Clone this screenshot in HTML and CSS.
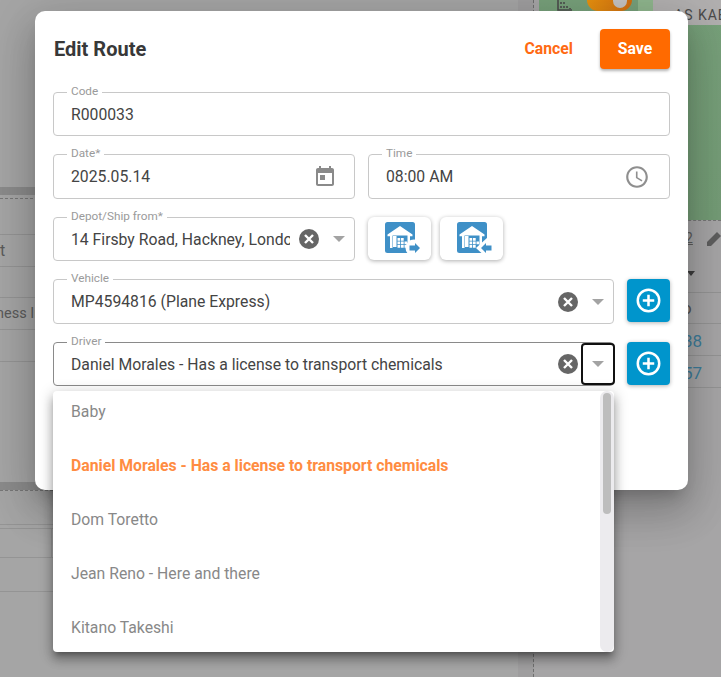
FILE: index.html
```html
<!DOCTYPE html>
<html lang="en">
<head>
<meta charset="utf-8">
<title>Edit Route</title>
<link rel="stylesheet" href="styles.css">
</head>
<body>
<div class="page">
  <section class="bg-left">
    <div class="bg-bar"></div>
    <div class="bg-dash"></div>
    <div class="bg-row bg-row-a"></div>
    <div class="bg-row bg-row-b"><span class="bg-text">t</span></div>
    <div class="bg-row bg-row-s"></div>
    <div class="bg-row bg-row-b"><span class="bg-text bg-text-far">ness In</span></div>
    <div class="bg-row bg-row-b"></div>
    <div class="bg-gap"></div>
    <div class="bg-bar"></div>
    <div class="bg-dash bg-dash-low"></div>
    <div class="bg-row bg-row-c"></div>
    <div class="bg-row bg-row-d"><span class="bg-cell"></span></div>
    <div class="bg-row bg-row-e"></div>
  </section>
  <div class="bg-sep"></div>
  <section class="bg-right">
    <div class="bg-map">
      <svg class="bg-chart" viewBox="0 0 16 11" aria-hidden="true"><path d="M1 0v10h14M4 2v2M4 6v2M7 2v2M7 6v2M10 6v2M13 8v1" fill="none" stroke="#4c4c4c" stroke-width="1.6"/></svg>
      <div class="bg-toggle"><span class="bg-knob"></span></div>
      <div class="bg-road"></div>
      <span class="bg-place">AS KABUL</span>
    </div>
    <div class="bg-dash bg-dash-map"></div>
    <div class="bg-table">
      <div class="bg-head">
        <span class="bg-num">2</span>
        <svg class="bg-pencil" viewBox="0 0 16 16" aria-hidden="true"><path d="M0 16v-4L10 2l4 4L4 16z" fill="#5e5e5e"/></svg>
      </div>
      <div class="bg-sort"></div>
      <div class="bg-tr bg-tr-a"><span class="bg-dark">o</span></div>
      <div class="bg-tr"><span class="bg-link">38</span></div>
      <div class="bg-tr"><span class="bg-link">57</span></div>
    </div>
  </section>
</div>

<div class="modal">
  <header class="modal-head">
    <h2 class="modal-title">Edit Route</h2>
    <button class="btn-cancel" type="button">Cancel</button>
    <button class="btn-save" type="button">Save</button>
  </header>

  <div class="form">
    <div class="field">
      <span class="label">Code</span>
      <span class="value">R000033</span>
    </div>

    <div class="row row-half">
      <div class="field">
        <span class="label">Date*</span>
        <span class="value">2025.05.14</span>
        <svg class="adorn" viewBox="0 0 24 24" aria-hidden="true"><path d="M19 3h-1V1h-2v2H8V1H6v2H5c-1.11 0-2 .9-2 2v14c0 1.1.89 2 2 2h14c1.1 0 2-.9 2-2V5c0-1.1-.9-2-2-2zm0 16H5V8h14v11zM7 10h5v5H7z" fill="#8a8a8a"/></svg>
      </div>
      <div class="field">
        <span class="label">Time</span>
        <span class="value">08:00 AM</span>
        <svg class="adorn adorn-clock" viewBox="0 0 24 24" aria-hidden="true"><path d="M11.99 2C6.47 2 2 6.48 2 12s4.47 10 9.99 10C17.52 22 22 17.52 22 12S17.52 2 11.99 2zM12 20c-4.42 0-8-3.58-8-8s3.58-8 8-8 8 3.58 8 8-3.58 8-8 8zm.5-13H11v6l5.25 3.15.75-1.23-4.5-2.67z" fill="#8f8f8f"/></svg>
      </div>
    </div>

    <div class="row row-half">
      <div class="field">
        <span class="label">Depot/Ship from*</span>
        <span class="value value-clip">14 Firsby Road, Hackney, London, E8 1DD</span>
        <svg class="clear" viewBox="0 0 20 20" aria-hidden="true"><circle cx="10" cy="10" r="10" fill="#666"/><path d="M6 6l8 8M14 6l-8 8" stroke="#fff" stroke-width="2.4"/></svg>
        <span class="arrow-box"><span class="caret"></span></span>
      </div>
      <div class="depot-actions">
        <button class="btn-icon" type="button">
          <svg class="wh" viewBox="0 0 40 32" aria-hidden="true">
            <rect width="30" height="31" rx="2.5" fill="#3f90c7"/>
            <path d="M2.5 12.5L15 4l12.500 8.500v1.700H25V26H5V14.200H2.500z" fill="#fff"/>
            <path d="M7.500 13.500h15V26h-15z" fill="#3f90c7"/>
            <path d="M8 14h3.500v11H8zM12.500 16h2.700v2.700h-2.700zM16 16h2.700v2.700H16zM12.500 19.500h2.700v2.700h-2.700zM16 19.500h2.700v2.700H16zM19.500 19.500h2.700v2.700h-2.700zM12.500 23h2.700v2.700h-2.700zM16 23h2.700v2.700H16zM19.500 23h2.700v2.700h-2.700z" fill="#fff"/>
            <circle cx="29" cy="26" r="8.500" fill="#fff"/>
            <path d="M24.500 23.500H30V21l5 5-5 5v-2.500h-5.500z" fill="#3f90c7"/>
          </svg>
        </button>
        <button class="btn-icon" type="button">
          <svg class="wh" viewBox="0 0 40 32" aria-hidden="true">
            <rect width="30" height="31" rx="2.500" fill="#3f90c7"/>
            <path d="M2.500 12.500L15 4l12.500 8.500v1.700H25V26H5V14.200H2.500z" fill="#fff"/>
            <path d="M7.500 13.500h15V26h-15z" fill="#3f90c7"/>
            <path d="M8 14h3.500v11H8zM12.500 16h2.700v2.700h-2.700zM16 16h2.700v2.700H16zM12.500 19.500h2.700v2.700h-2.700zM16 19.500h2.700v2.700H16zM19.500 19.500h2.700v2.700h-2.700zM12.500 23h2.700v2.700h-2.700zM16 23h2.700v2.700H16z" fill="#fff"/>
            <path d="M31 15L19 26l12 11z" fill="#fff"/>
            <path d="M34.500 23.500H29V21l-5 5 5 5v-2.500h5.500z" fill="#3f90c7"/>
          </svg>
        </button>
      </div>
    </div>

    <div class="row row-add">
      <div class="field grow">
        <span class="label">Vehicle</span>
        <span class="value value-clip">MP4594816 (Plane Express)</span>
        <svg class="clear" viewBox="0 0 20 20" aria-hidden="true"><circle cx="10" cy="10" r="10" fill="#666"/><path d="M6 6l8 8M14 6l-8 8" stroke="#fff" stroke-width="2.400"/></svg>
        <span class="arrow-box"><span class="caret"></span></span>
      </div>
      <button class="btn-add" type="button">
        <svg viewBox="0 0 24 24" aria-hidden="true"><circle cx="12" cy="12" r="10.300" fill="none" stroke="#fff" stroke-width="2.400"/><path d="M12 6.500v11M6.500 12h11" stroke="#fff" stroke-width="2.400"/></svg>
      </button>
    </div>

    <div class="row row-add">
      <div class="field grow field-open">
        <span class="label">Driver</span>
        <span class="value value-clip">Daniel Morales - Has a license to transport chemicals</span>
        <svg class="clear" viewBox="0 0 20 20" aria-hidden="true"><circle cx="10" cy="10" r="10" fill="#666"/><path d="M6 6l8 8M14 6l-8 8" stroke="#fff" stroke-width="2.400"/></svg>
        <span class="arrow-box arrow-focus"><span class="caret"></span></span>
      </div>
      <button class="btn-add" type="button">
        <svg viewBox="0 0 24 24" aria-hidden="true"><circle cx="12" cy="12" r="10.300" fill="none" stroke="#fff" stroke-width="2.400"/><path d="M12 6.500v11M6.500 12h11" stroke="#fff" stroke-width="2.400"/></svg>
      </button>
    </div>
  </div>
</div>

<div class="dropdown">
  <ul class="options">
    <li class="option">Baby</li>
    <li class="option option-on">Daniel Morales - Has a license to transport chemicals</li>
    <li class="option">Dom Toretto</li>
    <li class="option">Jean Reno - Here and there</li>
    <li class="option">Kitano Takeshi</li>
  </ul>
  <div class="scroll"><span class="thumb"></span></div>
</div>
</body>
</html>
```

FILE: styles.css
```css
* { box-sizing: border-box; }

html, body {
  margin: 0;
  height: 677px;
  overflow: hidden;
}

body {
  position: relative;
  font-family: Roboto, "Liberation Sans", sans-serif;
  background: #a6a5a6;
}

/* dimmed page behind the dialog */
.page {
  display: flex;
  height: 677px;
  color: #5c5c5c;
}

.bg-left {
  width: 518px;
  padding-top: 187px;
  flex: none;
  background: #a5a5a5;
}

.bg-bar { height: 8px; background: #8b8b8b; }

.bg-dash {
  height: 1px;
  margin-top: 3px;
  border-top: 1px dashed #777;
}

.bg-row {
  border-bottom: 1px solid #949494;
  display: flex;
  align-items: center;
  font-size: 16px;
}

.bg-row-a { height: 36px; }
.bg-row-b { height: 32px; }
.bg-row-s { height: 31px; }
.bg-row-c { height: 34px; }
.bg-row-d { height: 30px; margin-top: 3px; border-top: 1px solid #949494; }
.bg-row-e { height: 34px; }
.bg-gap { height: 120px; }
.bg-dash-low { margin-top: 0; }

.bg-text { color: #5a5a5a; }
.bg-text-far { margin-left: -4px; font-size: 14.500px; }
.bg-cell { margin-left: 51px; height: 100%; border-left: 1px solid #949494; }

.bg-sep {
  width: 16px;
  flex: none;
  background: #9f9e9f;
  border-right: 1px dashed #6f6f6f;
}

.bg-right { flex: 1; min-width: 0; overflow: hidden; }

.bg-map {
  display: flex;
  height: 220px;
  margin-left: 5px;
  background: linear-gradient(#77a07a, #749c76);
  position: relative;
  padding-left: 18px;
  align-items: flex-start;
}

.bg-chart { width: 16px; height: 11px; flex: none; }

.bg-toggle {
  width: 45px;
  height: 11px;
  margin-left: 14px;
  flex: none;
  background: linear-gradient(90deg, #e8920f, #cf6d12);
  border-radius: 0 0 14px 14px;
  display: flex;
  justify-content: flex-end;
  padding-right: 5px;
}

.bg-knob {
  width: 14px;
  height: 8px;
  background: #c4c2c0;
  border-radius: 0 0 8px 8px;
}

.bg-road {
  width: 30px;
  height: 26px;
  margin-left: 6px;
  background: #8fb58d;
  clip-path: polygon(0 0, 60% 0, 100% 60%, 100% 100%, 60% 100%, 0 40%);
  flex: none;
}

.bg-place {
  position: absolute;
  top: 0;
  left: 114px;
  right: 0;
  white-space: nowrap;
  font-size: 14px;
  letter-spacing: 1px;
  color: #4a4a4a;
  line-height: 14px;
  padding: 8px 0 0 21px;
  height: 25px;
  overflow: hidden;
  background: #b1afaf;
}

.bg-dash-map { margin-top: 0; }

.bg-table { padding-left: 150px; white-space: nowrap; font-size: 17px; }

.bg-head {
  display: flex;
  align-items: center;
  height: 34px;
  gap: 14px;
  font-size: 14px;
}

.bg-num { margin-left: 1px; text-decoration: underline; }
.bg-pencil { width: 16px; height: 16px; flex: none; }

.bg-sort {
  height: 38px;
  border-bottom: 1px solid #949494;
  padding: 16px 0 0 3px;
}

.bg-sort::before {
  content: "";
  display: block;
  width: 0;
  height: 0;
  border: 4px solid transparent;
  border-top: 5px solid #3c3c3c;
}

.bg-tr {
  height: 32px;
  padding-top: 3px;
  border-bottom: 1px solid #949494;
  display: flex;
  align-items: center;
}

.bg-tr-a { height: 31px; padding-top: 0; }
.bg-link { color: #3d7c99; margin-left: -1px; }
.bg-dark { margin-left: -2px; color: #555; }

/* dialog */
.modal {
  position: absolute;
  left: 35px;
  top: 11px;
  width: 653px;
  height: 479px;
  padding: 18px 18px 0;
  background: #fff;
  border-radius: 10px;
  box-shadow: 0 11px 15px -7px rgba(0,0,0,.2), 0 24px 38px 3px rgba(0,0,0,.14), 0 9px 46px 8px rgba(0,0,0,.12);
}

.modal-head {
  display: flex;
  align-items: center;
  height: 40px;
  margin-bottom: 22.900px;
}

.modal-title {
  margin: 0 auto 0 1px;
  font-size: 20px;
  font-weight: 700;
  color: #383838;
}

.btn-cancel {
  border: 0;
  background: none;
  padding: 0 0 1px;
  margin-right: 27px;
  font: 700 15.750px Roboto, sans-serif;
  color: #ff6a13;
}

.btn-save {
  width: 70px;
  height: 40px;
  border: 0;
  border-radius: 4px;
  padding: 0 0 2px;
  background: #ff6a00;
  color: #fff;
  font: 700 15.750px Roboto, sans-serif;
  box-shadow: 0 2px 3px rgba(0,0,0,.3);
}

.form {
  display: flex;
  flex-direction: column;
  gap: 18px;
}

.row { display: flex; gap: 13px; }

.row-half {
  display: grid;
  grid-template-columns: 302px 302px;
}

.row-add { align-items: flex-start; }
.grow { flex: 1; min-width: 0; }

.field {
  position: relative;
  display: flex;
  align-items: center;
  height: 44.500px;
  padding: 0 8px 0 17px;
  border: 1px solid #c8c8c8;
  border-radius: 4px;
  color: #444;
}

.field-open { border-color: #8a8a8a; }

.label {
  position: absolute;
  left: 13px;
  top: -8px;
  padding: 0 4px;
  background: #fff;
  font-size: 11.750px;
  line-height: 13px;
  color: #9a9a9a;
  white-space: nowrap;
}

.value {
  flex: 1;
  min-width: 0;
  padding-top: 1px;
  font-size: 15.750px;
  line-height: 20px;
  white-space: nowrap;
}

.value-clip { overflow: hidden; margin-right: 9px; }

.adorn { width: 24px; height: 24px; margin-right: 9px; flex: none; }
.adorn-clock { width: 26px; height: 26px; margin-right: 11px; }

.clear { width: 20px; height: 20px; flex: none; margin-right: 3px; }

.arrow-box {
  width: 34px;
  height: 42px;
  margin-right: -10px;
  flex: none;
  display: flex;
  align-items: center;
  justify-content: center;
  border: 2px solid transparent;
  border-radius: 4px;
}

.arrow-focus { border-color: #111; }

.caret {
  width: 0;
  height: 0;
  border-left: 6px solid transparent;
  border-right: 6px solid transparent;
  border-top: 6px solid #a3a3a3;
}

.depot-actions { display: flex; gap: 9px; }

.btn-icon {
  width: 63px;
  height: 43px;
  border: 0;
  border-radius: 6px;
  background: #fff;
  padding: 5px 0 0 17px;
  display: flex;
  box-shadow: 0 1px 4px rgba(0,0,0,.32);
}

.wh { width: 40px; height: 32px; flex: none; overflow: hidden; }

.btn-add {
  width: 43px;
  height: 43px;
  flex: none;
  border: 0;
  border-radius: 4px;
  padding: 9px;
  background: #0095cc;
  display: flex;
  box-shadow: 0 1px 4px rgba(0,0,0,.3);
}

.btn-add svg { width: 25px; height: 25px; flex: none; }

/* open list of drivers */
.dropdown {
  position: absolute;
  left: 53px;
  top: 391px;
  width: 561px;
  height: 261px;
  display: flex;
  overflow: hidden;
  background: #fff;
  border-radius: 4px;
  box-shadow: 0 5px 5px -3px rgba(0,0,0,.3), 0 8px 10px 1px rgba(0,0,0,.2), 0 3px 14px 2px rgba(0,0,0,.18);
}

.options {
  flex: 1;
  list-style: none;
  margin: -7px 0 0;
  padding: 0;
}

.option {
  height: 54px;
  padding-left: 18px;
  display: flex;
  align-items: center;
  font-size: 15.750px;
  color: #888;
}

.option-on {
  font-weight: 700;
  color: #ff8c42;
}

.scroll {
  width: 14px;
  flex: none;
  padding: 2px 3px 0;
  background: #ecebee;
  border-radius: 7px;
}

.thumb {
  display: block;
  height: 121px;
  background: #bdbdbd;
  border-radius: 4px;
}
```
